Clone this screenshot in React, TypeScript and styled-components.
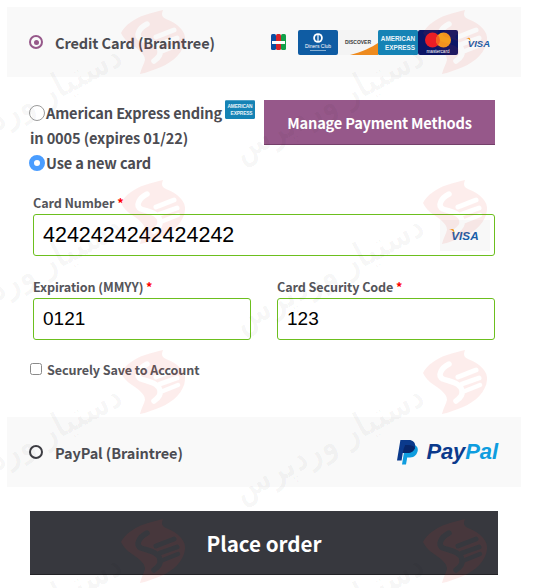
import React from "react";
import styled, { createGlobalStyle } from "styled-components";

const UI = `"Noto Sans CJK SC", "Source Sans Pro", "Open Sans", sans-serif`;
const ICON_TEXT = "'Liberation Sans', Arial, sans-serif";

const Global = createGlobalStyle`
  html, body { margin: 0; padding: 0; background: #fff; }
  * { box-sizing: border-box; }
`;

const Page = styled.div`
  position: relative;
  width: 536px;
  height: 588px;
  overflow: hidden;
  padding: 7px 15px 0 7px;
  font-family: ${UI};
  color: #4c4c52;
`;

const MethodBar = styled.div`
  height: 70px;
  background: #f9f9f9;
  display: flex;
  align-items: center;
  padding-left: 22px;
`;

const MethodName = styled.span`
  font-size: 14.5px;
  font-weight: 700;
  letter-spacing: -0.1px;
  margin-left: 12px;
  flex: 1;
  color: #4c4c52;
`;

const MethodRadio = styled.span<{ $on?: boolean }>`
  width: 14px;
  height: 14px;
  border-radius: 50%;
  border: 2.5px solid ${(p) => (p.$on ? "#96588a" : "#3d3d43")};
  display: flex;
  align-items: center;
  justify-content: center;
  &::after {
    content: "";
    width: 5px;
    height: 5px;
    border-radius: 50%;
    background: ${(p) => (p.$on ? "#96588a" : "transparent")};
  }
`;

const CardIcons = styled.div`
  display: flex;
  align-items: center;
  margin-right: 29px;
`;

const IconSlot = styled.svg<{ $gap?: number }>`
  display: block;
  flex: none;
  margin-left: ${(p) => p.$gap ?? 0}px;
`;

const Details = styled.div`
  padding: 23px 26px 0 23px;
`;

const SavedRow = styled.div`
  display: flex;
  justify-content: space-between;
  align-items: flex-start;
  height: 76px;
`;

const SavedList = styled.div`
  width: 230px;
  font-size: 14.6px;
  font-weight: 700;
  letter-spacing: -0.15px;
  line-height: 25px;
  color: #4c4c52;
  white-space: nowrap;
`;

const SavedLine = styled.div`
  display: flex;
  align-items: center;
  height: 25px;
`;

const SavedCardBadge = styled.span`
  align-self: flex-start;
  margin-left: 3px;
`;

const RadioDot = styled.span<{ $on?: boolean }>`
  flex: none;
  width: 16px;
  height: 16px;
  margin-left: -1px;
  margin-right: 1px;
  border-radius: 50%;
  background: #fff;
  border: ${(p) => (p.$on ? "5px solid #4a9dff" : "1px solid #9b9b9b")};
`;

const ManageButton = styled.button`
  width: 231px;
  height: 45px;
  border: 0;
  border-bottom: 1px solid #74406a;
  background: #96588a;
  color: #fff;
  font-family: ${UI};
  font-size: 14.6px;
  letter-spacing: -0.2px;
  font-weight: 700;
  padding: 0;
`;

const Form = styled.div`
  padding: 17px 0 0 3px;
`;

const FieldLabel = styled.label`
  display: block;
  font-size: 12.6px;
  font-weight: 700;
  letter-spacing: -0.1px;
  line-height: 19px;
  height: 19px;
  margin-bottom: 2px;
  color: #55555a;
`;

const Req = styled.span`
  color: #f00;
`;

const InputBox = styled.div`
  position: relative;
  height: 42px;
  border: 1.5px solid #6cbf1e;
  border-radius: 3px;
  display: flex;
  align-items: center;
  padding-left: 9px;
`;

const CardInput = styled.input<{ $large?: boolean }>`
  border: 0;
  outline: 0;
  background: transparent;
  width: 100%;
  padding: 0;
  color: #000;
  font-family: "Liberation Sans", Arial, sans-serif;
  font-size: ${(p) => (p.$large ? "21.5px" : "19px")};
`;

const VisaBox = styled.div`
  flex: none;
  width: 50px;
  height: 31px;
  margin-right: 4px;
  background: #f8f8f8;
  display: flex;
  align-items: center;
  justify-content: center;
`;

const FieldRow = styled.div`
  display: grid;
  grid-template-columns: 218px 218px;
  column-gap: 26px;
  margin-top: 21px;
`;

const SaveRow = styled.label`
  display: flex;
  align-items: center;
  height: 20px;
  margin: 19px 0 0 -3px;
  font-size: 12.6px;
  font-weight: 700;
  letter-spacing: -0.1px;
  color: #55555a;
`;

const SaveCheck = styled.span`
  width: 12px;
  height: 12px;
  margin-right: 5px;
  border: 1px solid #8a8a8a;
  border-radius: 2.5px;
  background: #fff;
`;

const PaypalBar = styled(MethodBar)`
  margin-top: 38px;
`;

const PaypalBrand = styled.div`
  display: flex;
  align-items: center;
  gap: 8px;
  margin-right: 23px;
`;

const PaypalWord = styled.span`
  font-family: "Liberation Sans", Arial, sans-serif;
  font-style: italic;
  font-weight: 700;
  font-size: 22px;
  letter-spacing: -0.1px;
  color: #0b3a8c;
`;

const PaypalPal = styled.span`
  color: #0f9ddf;
`;

const PlaceOrder = styled.button`
  display: block;
  width: 468px;
  height: 64px;
  margin: 24px 0 0 23px;
  border: 0;
  border-bottom: 1px solid #232327;
  background: #37383e;
  color: #fff;
  font-family: ${UI};
  font-size: 20.6px;
  font-weight: 700;
  padding: 0;
`;

const WatermarkLayer = styled.svg`
  position: absolute;
  inset: 0;
  width: 536px;
  height: 588px;
  pointer-events: none;
`;

const WatermarkText = styled.text`
  font-family: "DejaVu Sans", sans-serif;
  font-size: 36px;
  font-weight: 700;
  fill: #000;
  fill-opacity: 0.028;
`;

const cols = [153, 455];
const rows = [42, 212, 382, 551];

const Watermark = () => (
  <WatermarkLayer viewBox="0 0 536 588" aria-hidden="true">
    <defs>
      <mask id="wm-cut" maskUnits="userSpaceOnUse" x="-40" y="-40" width="80" height="80">
        <rect x="-40" y="-40" width="80" height="80" fill="#fff" />
        <g fill="none" stroke="#000" strokeLinecap="round" strokeLinejoin="round">
          <path d="M-6 -18 C-14 -14 -18 -6 -12 -3 C-4 0 6 1 7 9 C8 14 4 17 1 19" strokeWidth="5.5" />
          <path d="M3 -5 L21 -12" strokeWidth="5" />
          <path d="M7 2 L24 -4" strokeWidth="5" />
          <path d="M10 9 L25 3" strokeWidth="4.5" />
        </g>
      </mask>
    </defs>
    {rows.flatMap((y) =>
      cols.map((x) => (
        <g key={`${x}-${y}`} transform={`translate(${x} ${y})`}>
          <path
            d="M10 -32 C8 -27 9 -25 13 -23 C26 -18 33 -10 32 -2 C31 10 20 20 8 25 C0 28 -7 31 -13 32 C-12 27 -9 22 -8 18 C-8 12 -14 8 -21 3 C-26 0 -30 -5 -32 -9 C-28 -17 -18 -24 -8 -27 C-2 -29 5 -31 10 -32 Z"
            fill="#e8382e"
            fillOpacity="0.09"
            mask="url(#wm-cut)"
          />
          <WatermarkText
            transform="translate(-28 22) rotate(-28) scale(0.76 1)"
            textAnchor="start"
            direction="rtl"
          >
            دستیار وردپرس
          </WatermarkText>
        </g>
      ))
    )}
  </WatermarkLayer>
);

const JcbIcon = () => (
  <IconSlot width="15" height="16" viewBox="0 0 15 16">
    <rect x="0" y="0" width="5" height="16" rx="1.5" fill="#0b4ea2" />
    <rect x="5" y="0" width="5" height="16" rx="1.5" fill="#d8232a" />
    <rect x="10" y="0" width="5" height="16" rx="1.5" fill="#12a04a" />
    <rect x="1" y="7" width="13" height="3" fill="#fff" />
  </IconSlot>
);

const DinersIcon = () => (
  <IconSlot width="40" height="25" viewBox="0 0 40 25" $gap={12}>
    <rect width="40" height="25" rx="2" fill="#0f5ca3" />
    <circle cx="20" cy="8" r="4.8" fill="#fff" />
    <circle cx="20" cy="8" r="3" fill="#0f5ca3" />
    <rect x="19.4" y="4.6" width="1.2" height="6.8" fill="#fff" />
    <text x="20" y="17.5" textAnchor="middle" fontFamily={ICON_TEXT} fontSize="5" fill="#fff">
      Diners Club
    </text>
    <rect x="12" y="20" width="16" height="1" fill="#fff" fillOpacity="0.5" />
  </IconSlot>
);

const DiscoverIcon = () => (
  <IconSlot width="40" height="25" viewBox="0 0 40 25">
    <rect width="40" height="25" fill="#f4f4f4" />
    <path d="M12 25 C24 22 34 17 40 13 V25 Z" fill="#ee8b1f" />
    <text x="20" y="14" textAnchor="middle" fontFamily={ICON_TEXT} fontWeight="700" fontSize="5" fill="#3a3a3a">
      DISCOVER
    </text>
  </IconSlot>
);

const AmexArt = ({ w, h }: { w: number; h: number }) => (
  <IconSlot width={w} height={h} viewBox="0 0 40 25">
    <rect width="40" height="25" rx="1.5" fill="#1583b5" />
    <text x="20" y="11" textAnchor="middle" fontFamily={ICON_TEXT} fontWeight="700" fontSize="6.4" fill="#e9f4fa">
      AMERICAN
    </text>
    <text x="22" y="19.5" textAnchor="middle" fontFamily={ICON_TEXT} fontWeight="700" fontSize="6.4" fill="#e9f4fa">
      EXPRESS
    </text>
  </IconSlot>
);

const MastercardIcon = () => (
  <IconSlot width="40" height="25" viewBox="0 0 40 25">
    <rect width="40" height="25" rx="2" fill="#0c1667" />
    <circle cx="14.5" cy="10" r="7.5" fill="#eb1c26" />
    <circle cx="25.5" cy="10" r="7.5" fill="#f69e1e" />
    <path d="M20 4.9 a7.5 7.5 0 0 1 0 10.2 a7.5 7.5 0 0 1 0 -10.2 Z" fill="#f4641f" />
    <text x="20" y="22.6" textAnchor="middle" fontFamily={ICON_TEXT} fontSize="4.6" fill="#fff">
      mastercard
    </text>
  </IconSlot>
);

const VisaMark = ({ w, gap }: { w: number; gap?: number }) => (
  <IconSlot width={w} height={(w * 14) / 34} viewBox="0 0 34 14" $gap={gap}>
    <path d="M0 1.5 C3 1.5 5 3.5 6.2 6.5 L5.2 2 C5 1.3 4.5 1 3.8 1 Z" fill="#f2a01e" />
    <text x="2.4" y="12.5" fontFamily={ICON_TEXT} fontStyle="italic" fontWeight="700" fontSize="12.5" fill="#1a5ea8">
      VISA
    </text>
  </IconSlot>
);

const PaypalMonogram = () => (
  <svg width="21" height="25" viewBox="0 0 21 25" style={{ display: "block" }}>
    <path d="M5 24.5 H9 L10.2 17.5 H13 C17.5 17.5 20.5 14 20.8 10 C21 7 19 5 16 5 H8.2 Z" fill="#0f9ddf" />
    <path d="M0 20.5 H4.6 L5.8 13 H10 C15 13 18 10.2 18.2 6 C18.3 2.4 15.8 0 11.8 0 H3.4 Z" fill="#0b3a8c" />
    <path d="M5.8 13 H10 C14 13 17 11 18 8 C16.8 5.8 14 5 11 5 H8.2 L6.6 9 Z" fill="#08276b" />
  </svg>
);

export default function App() {
  return (
    <Page>
      <Global />
      <MethodBar>
        <MethodRadio $on />
        <MethodName>Credit Card (Braintree)</MethodName>
        <CardIcons>
          <JcbIcon />
          <DinersIcon />
          <DiscoverIcon />
          <AmexArt w={40} h={25} />
          <MastercardIcon />
          <VisaMark w={26} gap={8} />
        </CardIcons>
      </MethodBar>

      <Details>
        <SavedRow>
          <SavedList>
            <SavedLine>
              <RadioDot />
              American Express ending
              <SavedCardBadge>
                <AmexArt w={30} h={19} />
              </SavedCardBadge>
            </SavedLine>
            <SavedLine>in 0005 (expires 01/22)</SavedLine>
            <SavedLine>
              <RadioDot $on />
              Use a new card
            </SavedLine>
          </SavedList>
          <ManageButton>Manage Payment Methods</ManageButton>
        </SavedRow>

        <Form>
          <FieldLabel>
            Card Number <Req>*</Req>
          </FieldLabel>
          <InputBox>
            <CardInput $large readOnly value="4242424242424242" />
            <VisaBox>
              <VisaMark w={32} />
            </VisaBox>
          </InputBox>
          <FieldRow>
            <div>
              <FieldLabel>
                Expiration (MMYY) <Req>*</Req>
              </FieldLabel>
              <InputBox>
                <CardInput readOnly value="0121" />
              </InputBox>
            </div>
            <div>
              <FieldLabel>
                Card Security Code <Req>*</Req>
              </FieldLabel>
              <InputBox>
                <CardInput readOnly value="123" />
              </InputBox>
            </div>
          </FieldRow>
          <SaveRow>
            <SaveCheck />
            Securely Save to Account
          </SaveRow>
        </Form>
      </Details>

      <PaypalBar>
        <MethodRadio />
        <MethodName>PayPal (Braintree)</MethodName>
        <PaypalBrand>
          <PaypalMonogram />
          <PaypalWord>
            Pay<PaypalPal>Pal</PaypalPal>
          </PaypalWord>
        </PaypalBrand>
      </PaypalBar>

      <PlaceOrder>Place order</PlaceOrder>
      <Watermark />
    </Page>
  );
}
